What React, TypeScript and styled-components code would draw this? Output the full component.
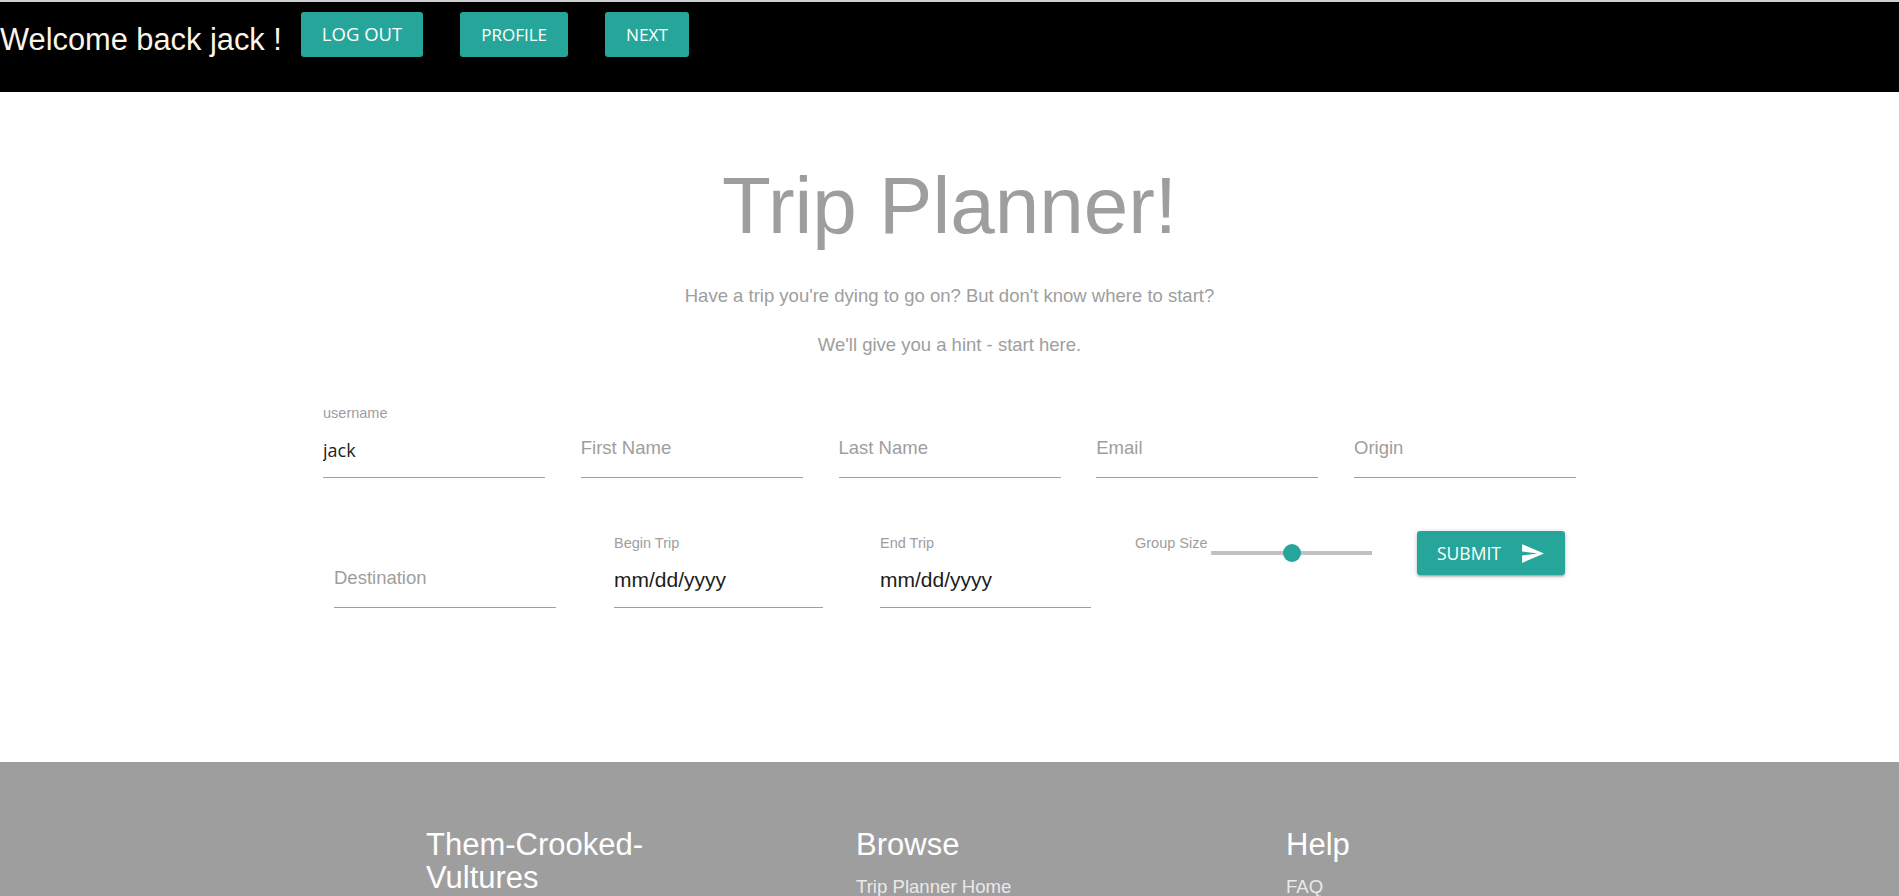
import React from "react";
import styled, { createGlobalStyle } from "styled-components";

const GlobalStyle = createGlobalStyle`
  html, body {
    margin: 0;
    padding: 0;
    background: #ffffff;
  }
  body {
    font-family: "Liberation Sans", Arial, sans-serif;
  }
  *, *::before, *::after {
    box-sizing: border-box;
  }
`;

const Header = styled.header`
  display: flex;
  align-items: flex-start;
  height: 92px;
  background: #000000;
  border-top: 2px solid #cfcfcf;
  padding-top: 10px;
`;

const Welcome = styled.h4`
  margin: 5px 19px 0 0;
  font-family: "Liberation Sans", Arial, sans-serif;
  font-weight: 400;
  font-size: 30.8px;
  line-height: 45px;
  color: #fdf5e6;
  white-space: nowrap;
`;

const NavButtons = styled.nav`
  display: flex;
  gap: 37px;
`;

const NavButton = styled.button<{ $size: number; $raised?: boolean }>`
  height: 45px;
  padding: 0 21px ${(p) => (p.$raised ? "3px" : "0")};
  background: #26a69a;
  color: #ffffff;
  border: none;
  border-radius: 3px;
  font-family: "Open Sans", "Segoe UI", sans-serif;
  font-size: ${(p) => p.$size}px;
  text-transform: uppercase;
  white-space: nowrap;
  cursor: pointer;
`;

const Main = styled.main`
  padding: 70px 0 154px;
  text-align: center;
`;

const Title = styled.h1`
  margin: 0;
  font-family: "Liberation Sans", Arial, sans-serif;
  font-weight: 400;
  font-size: 80px;
  line-height: 88px;
  color: #9e9e9e;
`;

const Tagline = styled.p`
  margin: 35px 0 0;
  font-size: 18.5px;
  line-height: 21px;
  color: #9e9e9e;
  & + & {
    margin-top: 28px;
  }
`;

const Form = styled.form`
  margin-top: 50px;
  display: flex;
  flex-direction: column;
  align-items: center;
  gap: 57px;
  text-align: left;
`;

const TopRow = styled.div`
  display: grid;
  grid-template-columns: repeat(5, 222px);
  column-gap: 35.75px;
`;

const BottomRow = styled.div`
  display: flex;
  align-items: flex-start;
`;

const Field = styled.div<{ $w?: number; $mr?: number }>`
  display: flex;
  flex-direction: column;
  width: ${(p) => (p.$w ? `${p.$w}px` : "auto")};
  margin-right: ${(p) => p.$mr ?? 0}px;
`;

const FieldLabel = styled.label`
  height: 17px;
  font-size: 14.5px;
  line-height: 17px;
  color: #9e9e9e;
  white-space: nowrap;
`;

const TextInput = styled.input<{ $date?: boolean; $hint?: boolean }>`
  width: 100%;
  height: 56px;
  margin: 0;
  padding: 0 0 ${(p) => (p.$hint ? "5px" : "0")};
  border: none;
  border-bottom: 1px solid #9e9e9e;
  border-radius: 0;
  outline: none;
  background: transparent;
  font-family: "Open Sans", "Segoe UI", sans-serif;
  font-size: 18px;
  color: #212121;
  &::placeholder {
    font-family: "Liberation Sans", Arial, sans-serif;
    font-size: ${(p) => (p.$date ? "21px" : "18.5px")};
    color: ${(p) => (p.$date ? "#1c1c1c" : "#9e9e9e")};
    opacity: 1;
  }
`;

const GroupBlock = styled.div`
  display: flex;
  align-items: flex-start;
  width: 237px;
  margin-right: 45px;
`;

const GroupLabel = styled.label`
  width: 76px;
  font-size: 14.5px;
  line-height: 17px;
  color: #9e9e9e;
  white-space: nowrap;
`;

const Range = styled.input`
  -webkit-appearance: none;
  appearance: none;
  width: 161px;
  height: 18px;
  margin: 9px 0 0;
  padding: 0;
  background: transparent;
  outline: none;
  &::-webkit-slider-runnable-track {
    height: 4px;
    background: #c2c0c2;
    border: none;
  }
  &::-webkit-slider-thumb {
    -webkit-appearance: none;
    appearance: none;
    width: 18px;
    height: 18px;
    margin-top: -7px;
    border: none;
    border-radius: 50%;
    background: #26a69a;
  }
`;

const SubmitButton = styled.button`
  display: flex;
  align-items: center;
  justify-content: space-between;
  width: 148px;
  height: 44px;
  margin-top: -4px;
  padding: 0 20px;
  border: none;
  border-radius: 3px;
  background: #26a69a;
  color: #ffffff;
  font-family: "Open Sans", "Segoe UI", sans-serif;
  font-size: 17.5px;
  text-transform: uppercase;
  box-shadow: 0 2px 2px 0 rgba(0, 0, 0, 0.14), 0 3px 1px -2px rgba(0, 0, 0, 0.12),
    0 1px 5px 0 rgba(0, 0, 0, 0.2);
  cursor: pointer;
`;

const SendIcon = styled.svg`
  width: 25px;
  height: 25px;
  fill: #ffffff;
  flex: none;
`;

const Footer = styled.footer`
  display: grid;
  grid-template-columns: 430px 430px 1fr;
  background: #9e9e9e;
  padding: 66px 0 80px 426px;
`;

const FooterColumn = styled.div`
  display: flex;
  flex-direction: column;
`;

const FooterHeading = styled.h5`
  margin: 0;
  max-width: 260px;
  font-family: "Liberation Sans", Arial, sans-serif;
  font-weight: 400;
  font-size: 31px;
  line-height: 33px;
  color: #ffffff;
`;

const FooterText = styled.p`
  margin: 15px 0 0;
  max-width: 300px;
  font-size: 18.5px;
  line-height: 21px;
  color: rgba(255, 255, 255, 0.8);
`;

const FooterLink = styled.a`
  display: block;
  margin-top: 15px;
  font-size: 18.6px;
  line-height: 21px;
  color: rgba(255, 255, 255, 0.8);
  text-decoration: none;
`;

export default function App() {
  return (
    <>
      <GlobalStyle />
      <Header>
        <Welcome>Welcome back jack !</Welcome>
        <NavButtons>
          <NavButton $size={18.5} $raised>
            Log out
          </NavButton>
          <NavButton $size={17}>Profile</NavButton>
          <NavButton $size={17.2}>Next</NavButton>
        </NavButtons>
      </Header>

      <Main>
        <Title>Trip Planner!</Title>
        <Tagline>Have a trip you're dying to go on? But don't know where to start?</Tagline>
        <Tagline>We'll give you a hint - start here.</Tagline>

        <Form onSubmit={(e) => e.preventDefault()}>
          <TopRow>
            <Field>
              <FieldLabel htmlFor="username">username</FieldLabel>
              <TextInput id="username" defaultValue="jack" />
            </Field>
            <Field>
              <FieldLabel />
              <TextInput $hint placeholder="First Name" />
            </Field>
            <Field>
              <FieldLabel />
              <TextInput $hint placeholder="Last Name" />
            </Field>
            <Field>
              <FieldLabel />
              <TextInput $hint placeholder="Email" />
            </Field>
            <Field>
              <FieldLabel />
              <TextInput $hint placeholder="Origin" />
            </Field>
          </TopRow>

          <BottomRow>
            <Field $w={222} $mr={58}>
              <FieldLabel />
              <TextInput $hint placeholder="Destination" />
            </Field>
            <Field $w={209} $mr={57}>
              <FieldLabel>Begin Trip</FieldLabel>
              <TextInput $date placeholder="mm/dd/yyyy" />
            </Field>
            <Field $w={211} $mr={44}>
              <FieldLabel>End Trip</FieldLabel>
              <TextInput $date placeholder="mm/dd/yyyy" />
            </Field>
            <GroupBlock>
              <GroupLabel>Group Size</GroupLabel>
              <Range type="range" min={1} max={10} step={0.5} defaultValue={5.5} />
            </GroupBlock>
            <SubmitButton type="submit">
              Submit
              <SendIcon viewBox="0 0 24 24" aria-hidden="true">
                <path d="M2.01 21L23 12 2.01 3 2 10l15 2-15 2z" />
              </SendIcon>
            </SubmitButton>
          </BottomRow>
        </Form>
      </Main>

      <Footer>
        <FooterColumn>
          <FooterHeading>Them-Crooked-Vultures</FooterHeading>
          <FooterText>Plan your next trip with friends.</FooterText>
        </FooterColumn>
        <FooterColumn>
          <FooterHeading>Browse</FooterHeading>
          <FooterLink href="#">Trip Planner Home</FooterLink>
        </FooterColumn>
        <FooterColumn>
          <FooterHeading>Help</FooterHeading>
          <FooterLink href="#">FAQ</FooterLink>
        </FooterColumn>
      </Footer>
    </>
  );
}
